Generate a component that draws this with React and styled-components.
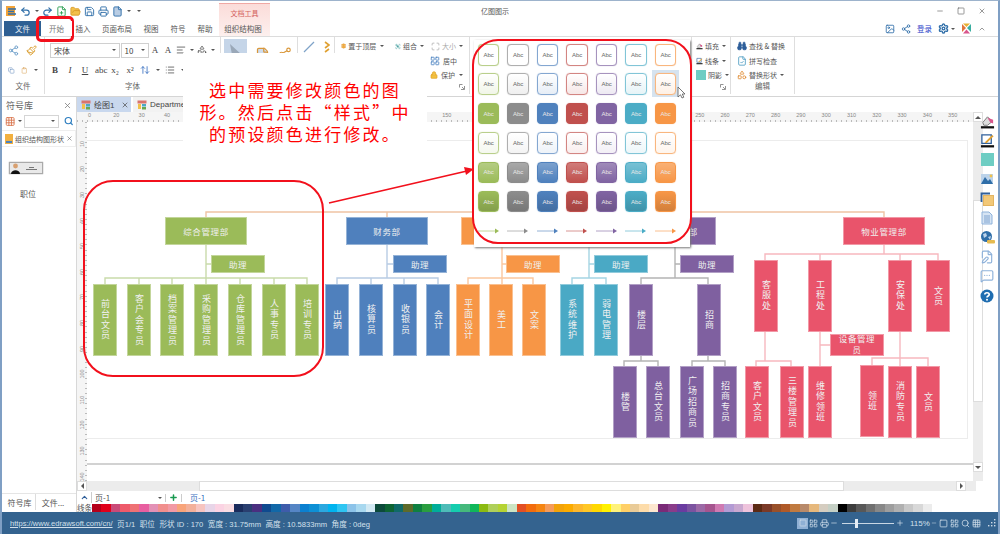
import React from "react";
import styled, { createGlobalStyle } from "styled-components";
import {
  Undo2, Redo2, FilePlus, FolderOpen, Save, Printer, File, Share2, Settings, Search, Lock, Copy, Clipboard,
  Paintbrush, Binoculars, FileCheck, Layers, FilePen, MessageSquareMore,
  Plus, Minus, Square, X, ChevronUp, Image, Shapes, ArrowUpDown, List, AlignLeft, Group, Maximize, Grid3x3,
  LayoutGrid,
} from "lucide-react";

const GREEN = "#9bbb59";
const BLUE = "#4f80bd";
const ORANGE = "#f79646";
const TEAL = "#4aa9c5";
const PURPLE = "#7f60a0";
const PINK = "#e9546b";

const GlobalStyle = createGlobalStyle`
  html, body { margin: 0; padding: 0; background: #fff; }
  body { font-family: "Noto Sans CJK SC", "Liberation Sans", sans-serif; color: #555; }
  * { box-sizing: border-box; }
`;

const Win = styled.div`
  position: relative;
  width: 1000px;
  height: 534px;
  overflow: hidden;
  background: #fff;
  display: flex;
  flex-direction: column;
  border-top: 1px solid #9db3cc;
  border-left: 2px solid #7f9fc4;
  border-right: 2px solid #7f9fc4;
`;

const TitleBar = styled.div`
  height: 20px;
  display: flex;
  align-items: center;
  padding-left: 3px;
  font-size: 7px;
`;

const QuickBar = styled.div`
  width: 476px;
  display: flex;
  align-items: center;
  gap: 3px;
  color: #2f6ea8;
`;

const ContextHead = styled.div`
  position: absolute;
  left: 217px;
  top: 2px;
  width: 51px;
  height: 33px;
  padding-top: 4px;
  text-align: center;
  font-size: 7px;
  color: #d4605c;
  background: linear-gradient(#fbdcd9, #fdf0ee);
  border-top: 1px solid #f0a8a4;
`;

const WinControls = styled.div`
  margin-left: auto;
  width: 62px;
  display: flex;
  justify-content: space-between;
  padding-right: 12px;
  color: #666;
`;

const TabRow = styled.div`
  height: 16px;
  display: flex;
  align-items: stretch;
  font-size: 7.5px;
  border-bottom: 1px solid #dcdcdc;
`;

const FileTab = styled.div`
  width: 37px;
  margin-left: 2px;
  background: #2e5f93;
  color: #e8eff6;
  display: flex;
  align-items: center;
  justify-content: center;
`;

const Tab = styled.div`
  width: ${(p) => p.$w}px;
  display: flex;
  align-items: center;
  justify-content: center;
  background: ${(p) => (p.$on ? "#fff" : "transparent")};
  position: relative;
  z-index: 1;
  color: ${(p) => (p.$on ? "#777" : "#555")};
`;

const TabRight = styled.div`
  margin-left: auto;
  display: flex;
  align-items: center;
  gap: 6px;
  padding-right: 12px;
  color: #2f6ea8;
`;

const Login = styled.span`
  color: #2a3fc8;
  font-size: 7.5px;
`;

const Ribbon = styled.div`
  height: 60px;
  display: flex;
  border-bottom: 1px solid #d5d5d5;
`;

const RibbonGroup = styled.div`
  width: ${(p) => p.$w}px;
  padding-top: ${(p) => p.$top ?? 3}px;
  display: flex;
  flex-direction: column;
  position: relative;
  border-right: 1px solid #dedede;
  margin-bottom: 2px;
  flex: none;
`;

const GroupBody = styled.div`
  flex: 1;
  min-height: 0;
  display: flex;
  flex-direction: column;
  padding: 0 ${(p) => p.$pad ?? 6}px;
`;

const GroupLabel = styled.div`
  height: 14px;
  flex: none;
  font-size: 7.5px;
  text-align: center;
  color: #666;
`;

const LauncherRow = styled.div`
  height: 14px;
  flex: none;
  display: flex;
  justify-content: flex-end;
  align-items: center;
  padding-right: 4px;
`;

const Row = styled.div`
  height: ${(p) => p.$h ?? 20}px;
  flex: none;
  display: flex;
  align-items: center;
  gap: ${(p) => p.$gap ?? 5}px;
  padding-left: ${(p) => p.$pl ?? 0}px;
  font-size: 7px;
  white-space: nowrap;
`;

const Select = styled.div`
  width: ${(p) => p.$w}px;
  height: 15px;
  border: 1px solid #d0d0d0;
  padding: 0 3px;
  display: flex;
  align-items: center;
  justify-content: space-between;
  font-size: 8px;
  color: #444;
`;

const Caret = styled.span`
  display: inline-block;
  flex: none;
  width: 0;
  height: 0;
  border-left: 2px solid transparent;
  border-right: 2px solid transparent;
  border-top: 2.5px solid #555;
  margin-left: ${(p) => p.$ml ?? 1}px;
`;

const Spacer = styled.span`
  width: ${(p) => p.$w}px;
  flex: none;
`;

const Muted = styled.span`
  display: flex;
  align-items: center;
  gap: 2px;
  color: #aaa;
`;

const Fmt = styled.span`
  font-family: "Liberation Serif", serif;
  font-size: 9px;
  font-weight: ${(p) => (p.$b ? 700 : 400)};
  font-style: ${(p) => (p.$i ? "italic" : "normal")};
  text-decoration: ${(p) => (p.$u ? "underline" : "none")};
  color: #444;
  width: 10px;
  text-align: center;
`;

const PointerBtn = styled.div`
  width: 23px;
  height: 30px;
  margin-left: 3px;
  background: #c5d5e8;
  display: flex;
  justify-content: center;
  padding-top: 4px;
`;

const Main = styled.div`
  flex: 1;
  display: flex;
  min-height: 0;
`;

const SymbolPanel = styled.div`
  width: 75px;
  display: flex;
  flex-direction: column;
  border-right: 1px solid #d8d8d8;
`;

const PanelHead = styled.div`
  height: 16px;
  padding: 0 4px;
  display: flex;
  align-items: center;
  justify-content: space-between;
  font-size: 9px;
  color: #666;
`;

const PanelTools = styled.div`
  height: 16px;
  padding: 0 3px;
  display: flex;
  align-items: center;
  gap: 2px;
`;

const SmallInput = styled.div`
  width: 36px;
  height: 13px;
  border: 1px solid #d5d5d5;
  margin-right: 3px;
  display: flex;
  align-items: center;
  justify-content: flex-end;
  padding-right: 3px;
`;

const PanelTab = styled.div`
  height: 17px;
  margin-top: 1px;
  display: flex;
  align-items: center;
  gap: 2px;
  padding: 0 1px 0 3px;
  font-size: 7px;
  white-space: nowrap;
  border: 1px solid #eee;
  border-left: 0;
`;

const ShapeList = styled.div`
  flex: 1;
  padding: 15px 0 0 7px;
`;

const ShapeThumb = styled.div`
  width: 34px;
  height: 12px;
  display: flex;
  align-items: center;
  background: #e9e9e9;
  border: 1px solid #aaa;
  box-shadow: 0 0 1px #888;
`;

const ThumbLines = styled.div`
  flex: 1;
  display: flex;
  flex-direction: column;
  align-items: center;
  gap: 1px;
  &::before, &::after { content: ""; height: 1px; background: #777; }
  &::before { width: 5px; }
  &::after { width: 11px; }
`;

const ShapeName = styled.div`
  font-size: 8px;
  margin: 14px 0 0 11px;
`;

const PanelTabs = styled.div`
  height: 17px;
  margin-bottom: 2px;
  display: flex;
  align-items: center;
  font-size: 8px;
  border-top: 1px solid #e5e5e5;
`;

const PanelTabItem = styled.div`
  width: 34px;
  height: 100%;
  padding-left: ${(p) => p.$pl ?? 0}px;
  display: flex;
  align-items: center;
  justify-content: center;
  border-right: ${(p) => (p.$line ? "1px solid #ddd" : "0")};
`;

const Workspace = styled.div`
  flex: 1;
  min-width: 0;
  display: flex;
  flex-direction: column;
`;

const DocTabs = styled.div`
  height: 15px;
  display: flex;
  gap: 2px;
  font-size: 8px;
`;

const DocTab = styled.div`
  width: ${(p) => p.$w}px;
  background: ${(p) => (p.$on ? "#c9d8ee" : "#f2f2f2")};
  display: flex;
  align-items: center;
  gap: 3px;
  padding-left: 4px;
  color: #444;
  font-family: "Liberation Sans", "Noto Sans CJK SC", sans-serif;
  overflow: hidden;
  white-space: nowrap;
`;

const EditorTop = styled.div`
  height: 369px;
  width: 899px;
  display: flex;
`;

const EditorCol = styled.div`
  flex: 1;
  display: flex;
  flex-direction: column;
`;

const HRuler = styled.div`
  height: 10px;
  display: flex;
  padding-left: 11px;
  font-size: 5.5px;
  line-height: 7px;
  color: #888;
  font-family: "Liberation Sans", sans-serif;
  background:
    repeating-linear-gradient(90deg, #bbb 0 1px, transparent 1px 5.06px) 0 100% / 100% 2px no-repeat,
    #f5f5f5;
`;

const HMark = styled.span`
  width: 25.3px;
  flex: none;
`;

const CanvasRow = styled.div`
  flex: 1;
  display: flex;
  min-height: 0;
`;

const VRuler = styled.div`
  width: 10px;
  display: flex;
  flex-direction: column;
  padding-top: 9px;
  background:
    repeating-linear-gradient(0deg, #bbb 0 1px, transparent 1px 5.12px) 100% 0 / 2px 100% no-repeat,
    #f5f5f5;
`;

const VMark = styled.div`
  height: 25.6px;
  flex: none;
  font-size: 5.5px;
  color: #888;
  font-family: "Liberation Sans", sans-serif;
  display: flex;
  align-items: center;
  justify-content: center;
  & > span { transform: rotate(-90deg); }
`;

const Canvas = styled.div`
  flex: 1;
  position: relative;
  padding: 18px 5px 0 0;
`;

const PageSheet = styled.div`
  height: 299px;
  border: 1px solid #ececec;
  border-left: 0;
`;

const EndLine = styled.div`
  height: 2px;
  margin: 24px -5px 0 0;
  background: #d2d2d2;
`;

const Wires = styled.svg`
  position: absolute;
  left: 0;
  top: 0;
  width: 879px;
  height: 359px;
  fill: none;
  stroke-width: 1.4;
`;

const ORG_X = 87;
const ORG_Y = 122;

const OrgNode = styled.div.attrs((p) => ({
  style: { left: p.$x - ORG_X, top: p.$y - ORG_Y, width: p.$w, height: p.$h },
}))`
  position: absolute;
  display: flex;
  align-items: center;
  justify-content: center;
  background: ${(p) => p.$color};
  border: 1px solid color-mix(in srgb, ${(p) => p.$color} 60%, #fff);
  color: #f0f0f0;
  text-align: center;
  font-size: ${(p) => (p.$vertical ? 9 : 8.5)}px;
  line-height: ${(p) => (p.$tight ? 11 : 12)}px;
  letter-spacing: ${(p) => (p.$vertical ? 1.4 : 0.6)}px;
  writing-mode: ${(p) => (p.$vertical ? "vertical-rl" : "horizontal-tb")};
  text-orientation: upright;
  padding-bottom: ${(p) => (p.$tight ? 3 : 0)}px;
`;

const VScroll = styled.div`
  width: 10px;
  display: flex;
  flex-direction: column;
  background: #ececec;
`;

const ArrowBtn = styled.div`
  width: 10px;
  height: 10px;
  flex: none;
  background: #fff;
  border: 1px solid #ddd;
  display: flex;
  align-items: center;
  justify-content: center;
`;

const DownBtn = styled(ArrowBtn)`
  margin-top: auto;
  margin-bottom: 9px;
`;

const Tri = styled.span`
  width: 0;
  height: 0;
  border: 3px solid transparent;
  ${(p) => p.$dir === "up" && "border-bottom-color:#555; border-top-width:0;"}
  ${(p) => p.$dir === "down" && "border-top-color:#555; border-bottom-width:0;"}
  ${(p) => p.$dir === "left" && "border-right-color:#555; border-left-width:0;"}
  ${(p) => p.$dir === "right" && "border-left-color:#555; border-right-width:0;"}
`;

const VThumb = styled.div`
  height: 202px;
  margin-top: 78px;
  background: #fff;
  border: 1px solid #ddd;
`;

const HScroll = styled.div`
  height: 10px;
  width: 899px;
  flex: none;
  display: flex;
  background: #ececec;
`;

const HThumb = styled.div`
  width: 645px;
  margin: 0 112px;
  background: #fff;
  border: 1px solid #ddd;
`;

const RightBar = styled.div`
  position: absolute;
  right: 0;
  top: 109px;
  width: 22px;
  display: flex;
  flex-direction: column;
  align-items: center;
  padding-top: 3px;
  gap: 3.4px;
`;

const RightIcon = styled.div`
  width: 16px;
  height: 16px;
  display: flex;
  align-items: center;
  justify-content: center;
  color: ${(p) => p.$c ?? "#8fb2da"};
`;

const ColorBlock = styled.span`
  width: ${(p) => p.$s}px;
  height: ${(p) => p.$s}px;
  flex: none;
  background: #6ecdc3;
`;

const PageBar = styled.div`
  height: 13px;
  display: flex;
  align-items: center;
  font-size: 8px;
  padding-left: 3px;
`;

const PageName = styled.div`
  width: 66px;
  margin-left: 2px;
  padding-left: 3px;
  border-left: 1px solid #ccc;
  color: #555;
`;

const PageLink = styled.div`
  margin-left: 5px;
  color: #3a70c0;
`;

const Divider = styled.span`
  width: 1px;
  height: 8px;
  margin: 0 3px;
  background: #ccc;
`;

const SwatchRow = styled.div`
  height: 8px;
  display: flex;
  align-items: center;
`;

const SwatchLabel = styled.div`
  width: 15px;
  font-size: 7.5px;
  line-height: 8px;
  color: #555;
`;

const Swatch = styled.span`
  width: 9.45px;
  height: 8px;
  flex: none;
  background: ${(p) => p.$c};
`;

const StatusBar = styled.div`
  height: 22px;
  margin: 0 -2px;
  flex: none;
  display: flex;
  align-items: center;
  padding: 0 4px 0 10px;
  gap: 4.5px;
  background: #34638f;
  color: #d3e0ec;
  font-size: 7.6px;
  font-family: "Liberation Sans", "Noto Sans CJK SC", sans-serif;
`;

const StatusLink = styled.span`
  text-decoration: underline;
`;

const StatusRight = styled.div`
  margin-left: auto;
  display: flex;
  align-items: center;
`;

const ViewBtn = styled.span`
  width: 11px;
  height: 11px;
  display: flex;
  align-items: center;
  justify-content: center;
  background: ${(p) => (p.$on ? "#8fb0d4" : "transparent")};
`;

const ZoomTrack = styled.div`
  position: relative;
  width: 52px;
  height: 1px;
  margin: 0 2px 0 4px;
  background: #c9d7e4;
`;

const ZoomThumb = styled.span`
  position: absolute;
  left: 13px;
  top: -4px;
  width: 3px;
  height: 9px;
  background: #e4ecf4;
`;

const ZoomText = styled.span`
  width: 21px;
  margin-left: 6px;
  font-size: 8px;
`;

const StatusTools = styled.div`
  display: flex;
  align-items: center;
  gap: 2px;
  margin-right: 7px;
`;

/* everything below lies over the ribbon and the page */
const Note = styled.div`
  position: absolute;
  left: 181px;
  top: 52px;
  width: 244px;
  height: 88px;
  padding-top: 26px;
  background: #fff;
  color: #f00;
  font-size: 17px;
  line-height: 22px;
  letter-spacing: 2.2px;
  text-align: center;
  white-space: nowrap;
`;

const Gallery = styled.div`
  position: absolute;
  z-index: 0;
  left: 472px;
  top: 39px;
  width: 216px;
  height: 207px;
  padding: 4px 0 0 4px;
  background: #fff;
  box-shadow: 1px 1px 2px #777;
  display: grid;
  grid-template-columns: repeat(7, 21.3px);
  grid-auto-rows: 21.5px;
  column-gap: 8.2px;
  row-gap: 7.9px;
`;

const toneFill = (p) => {
  const c = p.$tone;
  if (p.$row === 0) return "#fff";
  if (p.$row === 1) return `linear-gradient(#fff, color-mix(in srgb, ${c} 14%, #fff))`;
  if (p.$row === 2) return c;
  if (p.$row === 3) return `linear-gradient(#fff, color-mix(in srgb, ${c} 10%, #fff))`;
  if (p.$row === 4) return `linear-gradient(color-mix(in srgb, ${c} 75%, #fff), ${c})`;
  return `linear-gradient(${c}, color-mix(in srgb, ${c} 85%, #000))`;
};

const StyleTile = styled.div`
  position: relative;
  border-radius: 4px;
  display: flex;
  align-items: center;
  justify-content: center;
  font-size: 6px;
  font-family: "Liberation Sans", sans-serif;
  background: ${toneFill};
  border: 1px solid color-mix(in srgb, ${(p) => p.$tone} ${(p) => (p.$row === 2 || p.$row > 3 ? 100 : 70)}%, #fff);
  box-shadow: 0 0 1px color-mix(in srgb, ${(p) => p.$tone} 60%, #fff);
  color: ${(p) => (p.$row === 2 || p.$row > 3 ? "#e8e8e8" : "#666")};
`;

const TileHover = styled.span`
  position: absolute;
  inset: -4px -4px -3px -4px;
  z-index: -1;
  background: #d5e3f0;
`;

const ArrowCell = styled.div`
  display: flex;
  align-items: center;
`;

const Cursor = styled.svg`
  position: absolute;
  left: 675px;
  top: 85px;
  width: 9px;
  height: 13px;
`;

const Ring = styled.div`
  position: absolute;
  left: ${(p) => p.$x}px;
  top: ${(p) => p.$y}px;
  width: ${(p) => p.$w}px;
  height: ${(p) => p.$h}px;
  border: ${(p) => p.$b ?? 2}px solid #f2101c;
  border-radius: ${(p) => p.$r}px;
  pointer-events: none;
`;

const NoteArrow = styled.svg`
  position: absolute;
  left: 325px;
  top: 160px;
  width: 150px;
  height: 50px;
`;

const swatches = [
  "#b5001a","#e0001b","#c94a78","#ee5a6a","#ef7174","#e85fa0","#e391b6","#f18f8d","#f29aa5","#f8a47a","#f3b09a","#f7c4c0","#e8d5e8","#fbd3e3","#fadde3",
  "#1a2c5c","#2a3f70","#4a2f80","#0f4a8f","#1168a8","#3e5cab","#5585c5","#0b80d0","#0d90d5","#2ba8e0","#00b4ef","#2fc5f2","#8cc3e9","#a8d8ef","#d2e9f3",
  "#0c4a3a","#0e6433","#0f6a68","#5e6a2a","#0f8040","#2a9e40","#00ae9a","#4ebcb8","#15cdae","#45b97c","#10b75a","#8cbb12","#afd05a","#b5d334","#cce5c4",
  "#e34f24","#f26c0d","#f58512","#f59b5a","#f2a30a","#fbab00","#fdb72c","#ffc726","#ffd800","#fff100","#fff27a","#ffcf66","#e9cb98","#fddcaa","#fde7cf",
  "#7a2b78","#8a3c8a","#6a3ca0","#7c53a0","#9c69a6","#a5558f","#cf7ab2","#b39bd4","#c9a8d0","#eec3dc",
  "#5c2a14","#7b3a28","#99502a","#b05a28","#c07a40","#b88a6a","#e6b87c","#d5cdc0","#c5d0c5",
  "#000000","#3d3d3d","#585858","#707070","#888888","#9e9e9e","#b0b0b0","#c8c8c8","#d8d8d8","#ececec",
];

const tones = ["#9bbb59", "#8c8c8c", "#4f81bd", "#c0504d", "#8064a2", "#4bacc6", "#f79646"];

// the orange and teal heads sit under the style gallery, their names don't show
const heads = [
  [165, "综合管理部", GREEN], [346, "财务部", BLUE], [461, "", ORANGE],
  [548, "", TEAL], [634, "招商管理部", PURPLE], [843, "物业管理部", PINK],
];
const helpers = [[211, GREEN], [393, BLUE], [506, ORANGE], [594, TEAL], [680, PURPLE]];

const staff = [
  [93, 284, GREEN, "前台文员"], [127, 284, GREEN, "客户会专员"], [160, 284, GREEN, "档案管理员"], [194, 284, GREEN, "采购管理员"],
  [228, 284, GREEN, "仓库管理员"], [262, 284, GREEN, "人事专员"], [295, 284, GREEN, "培训专员"],
  [325, 284, BLUE, "出纳"], [359, 284, BLUE, "核算员"], [393, 284, BLUE, "收银员"], [426, 284, BLUE, "会计"],
  [456, 284, ORANGE, "平面设计"], [489, 284, ORANGE, "美工"], [522, 284, ORANGE, "文案"],
  [560, 284, TEAL, "系统维护"], [594, 284, TEAL, "弱电管理"],
  [629, 284, PURPLE, "楼层"], [697, 284, PURPLE, "招商"],
  [613, 366, PURPLE, "楼管"], [646, 366, PURPLE, "总台文员"], [680, 366, PURPLE, "广场招商员"], [713, 366, PURPLE, "招商专员"],
  [754, 260, PINK, "客服处"], [808, 260, PINK, "工程处"], [888, 260, PINK, "安保处"], [926, 260, PINK, "文员"],
  [745, 366, PINK, "客户文员"], [780, 366, PINK, "三楼管理员"], [808, 366, PINK, "维修领班"],
  [860, 365, PINK, "领班"], [888, 366, PINK, "消防专员"], [916, 366, PINK, "文员"],
];

const wires = [
  ["#efc4a4", "M206 217V212H884V217M387 212V217"],
  ["#c9dbab", "M206 245V284M206 264H211M105 284V278H307V284M139 278V284M172 278V284M240 278V284M274 278V284"],
  ["#b8cce4", "M387 245V278M387 264H393M337 284V278H438V284M371 278V284M404 278V284"],
  ["#fbc79e", "M502 245V284M502 264H506M468 284V278H533V284"],
  ["#a5d5e3", "M589 245V278M589 264H594M572 284V278H606V284"],
  ["#b4b4b4", "M675 245V278M675 264H680M641 284V278H708V284M641 356V361M624 366V361H658V366M708 356V361M692 366V361H725V366"],
  ["#f7b8bf", "M884 245V254M765 260V254H938V260M820 254V260M900 254V260M765 332V361M756 366V361H791V366M820 332V366M820 345H830M900 332V366M872 365V358H928V366"],
];

const hMarks = [0, 20, 30, 40, 50, 60, 70, 80, 90, 100, 110, 120, 130, 140, 150, 160, 170, 180, 190, 200, 210, 220, 230, 240, 250, 260, 270, 280, 290, 300, 310, 320, 330, 340, 350];
const vMarks = [10, 20, 30, 40, 50, 60, 70, 80, 90, 100, 110, 120, 130, 140];
// these ruler numbers are covered by the note and by the gallery
const rulerShows = (m) => !((m >= 50 && m <= 140) || (m >= 160 && m <= 240));

const LogoMark = () => (
  <svg width="12" height="12" viewBox="0 0 12 12">
    <rect x="1" y="1" width="9" height="10" fill="#f2a33a" />
    <path d="M3 4h8M3 6.5h6M3 9h8" stroke="#2f6ea8" strokeWidth="1.3" />
  </svg>
);

const TabIcon = () => (
  <svg width="10" height="10" viewBox="0 0 10 10">
    <rect x="0.5" y="0.5" width="9" height="3" fill="#d9746c" />
    <rect x="1" y="4" width="3" height="5" fill="#f2c14a" />
    <rect x="5" y="4" width="4" height="2.5" fill="#4aa9c5" />
    <rect x="5" y="7" width="4" height="2.5" fill="#6aa84f" />
  </svg>
);

const BucketIcon = ({ s }) => (
  <svg width={s} height={s} viewBox="0 0 16 16">
    <path d="M3 9L8 3L13 8L8 12H4Z" fill="#ddd" stroke="#777" />
    <path d="M8 4L14 6V10L11 9Z" fill="#d8568c" />
    <rect x="1" y="13" width="14" height="2.4" fill="#111" />
  </svg>
);

const PenIcon = ({ s }) => (
  <svg width={s} height={s} viewBox="0 0 16 16">
    <path d="M2 2H12V11H2Z" fill="#fff" stroke="#2f5f9a" strokeWidth="1.4" />
    <path d="M5 10L13 2L14.5 3.5L7 11Z" fill="#e0a030" />
    <rect x="1" y="13" width="14" height="2.4" fill="#111" />
  </svg>
);

const PictureIcon = () => (
  <svg width="14" height="14" viewBox="0 0 14 14">
    <rect x="1" y="2" width="12" height="10" fill="#bcd3ea" />
    <path d="M1 12L5 5L8 9L10 7L13 12Z" fill="#2f6ea8" />
    <circle cx="11" cy="4" r="1.4" fill="#f2c14a" />
  </svg>
);

const StackIcon = () => (
  <svg width="14" height="14" viewBox="0 0 14 14">
    <path d="M1.5 10V1.5H10" fill="none" stroke="#2f5f9a" strokeWidth="1.8" />
    <rect x="3.5" y="3.5" width="10" height="10" fill="#f2c878" stroke="#e3b460" />
  </svg>
);

const DocListIcon = () => (
  <svg width="14" height="14" viewBox="0 0 14 14">
    <path d="M2 1H9L12 4V13H2Z" fill="#d6e4f3" stroke="#8fb2da" />
    <path d="M4 5H10M4 7H10M4 9H10M4 11H10" stroke="#7fa3d0" />
  </svg>
);

const GlobeIcon = () => (
  <svg width="15" height="15" viewBox="0 0 15 15">
    <circle cx="6.5" cy="6.5" r="5.5" fill="#2f6ea8" />
    <path d="M3 4L6 3L7 6L4 8ZM8 7L11 6L10 10Z" fill="#bcd3ea" />
    <rect x="7" y="10" width="8" height="3.5" rx="1" fill="#e6bb50" />
  </svg>
);

const HelpIcon = () => (
  <svg width="14" height="14" viewBox="0 0 14 14">
    <circle cx="7" cy="7" r="6.5" fill="#1f6db0" />
    <path d="M4.8 5.4C4.8 3.2 9.2 3.2 9.2 5.4C9.2 7 7 7 7 8.6" fill="none" stroke="#fff" strokeWidth="1.7" />
    <circle cx="7" cy="10.7" r="1" fill="#fff" />
  </svg>
);

const BrandIcon = () => (
  <svg width="11" height="11" viewBox="0 0 11 11">
    <path d="M1 1L5 5L1 9Z" fill="#e0743a" />
    <path d="M10 1L6 5L10 9Z" fill="#3aaea0" />
    <path d="M2 0.5H9L5.5 4Z" fill="#e8b030" />
    <path d="M2 10.5H9L5.5 6.5Z" fill="#d8568c" />
  </svg>
);

const Launcher = () => (
  <svg width="6" height="6" viewBox="0 0 6 6">
    <path d="M.5 3.5V.5H3.5M5.5 2V5.5H2M3 3L5 5" fill="none" stroke="#777" strokeWidth=".8" />
  </svg>
);

const Grip = () => (
  <svg width="8" height="8" viewBox="0 0 8 8" fill="#cfdbe7">
    <rect x="6" y="0" width="1.4" height="1.4" />
    <rect x="3" y="3" width="1.4" height="1.4" /><rect x="6" y="3" width="1.4" height="1.4" />
    <rect x="0" y="6" width="1.4" height="1.4" /><rect x="3" y="6" width="1.4" height="1.4" /><rect x="6" y="6" width="1.4" height="1.4" />
  </svg>
);

const Arrow = ({ color }) => (
  <svg width="21" height="6" viewBox="0 0 21 6">
    <path d="M0 3H17" stroke={color} strokeOpacity=".6" strokeWidth="1" />
    <path d="M17 .5L21 3L17 5.5Z" fill={color} />
  </svg>
);

const App = () => {
  return (
    <>
      <GlobalStyle />
      <Win lang="zh-CN">
        <TitleBar>
          <QuickBar>
            <LogoMark />
            <Undo2 size={11} strokeWidth={2.6} /><Caret />
            <Redo2 size={11} strokeWidth={2.6} />
            <FilePlus size={11} color="#2a9e50" />
            <FolderOpen size={11} color="#d99a2a" fill="#f2c14a" />
            <Save size={11} />
            <Printer size={11} />
            <File size={11} fill="#b9cde4" /><Caret /><Caret $ml={3} />
          </QuickBar>
          <span>亿图图示</span>
          <WinControls>
            <Minus size={8} /><Square size={8} /><X size={8} />
          </WinControls>
        </TitleBar>
        <ContextHead>文档工具</ContextHead>

        <TabRow>
          <FileTab>文件</FileTab>
          <Tab $w={31} $on>开始</Tab>
          <Tab $w={22}>插入</Tab>
          <Tab $w={46}>页面布局</Tab>
          <Tab $w={22}>视图</Tab>
          <Tab $w={32}>符号</Tab>
          <Tab $w={22}>帮助</Tab>
          <Tab $w={2} />
          <Tab $w={50}>组织结构图</Tab>
          <TabRight>
            <Image size={10} />
            <Share2 size={10} />
            <Login>登录</Login>
            <Settings size={11} strokeWidth={3} /><Caret $ml={-4} />
            <BrandIcon />
            <ChevronUp size={8} color="#666" />
          </TabRight>
        </TabRow>

        <Ribbon>
          <RibbonGroup $w={43}>
            <GroupBody $pad={6}>
              <Row $gap={7}><Share2 size={11} color="#6a9cc8" /><Paintbrush size={11} color="#d99a2a" /></Row>
              <Row $gap={6}><Copy size={11} color="#6a8fc0" /><Clipboard size={11} color="#d9a35a" /><Caret /></Row>
            </GroupBody>
            <GroupLabel>文件</GroupLabel>
          </RibbonGroup>

          <RibbonGroup $w={176}>
            <GroupBody $pad={5}>
              <Row $gap={1}>
                <Select $w={71}>宋体<Caret /></Select>
                <Select $w={29}>10<Caret /></Select>
                <Row $gap={3}>
                  <Fmt>A</Fmt><Fmt>A</Fmt>
                  <AlignLeft size={10} /><Caret />
                  <Shapes size={10} /><Caret />
                </Row>
              </Row>
              <Row $gap={5}>
                <Fmt $b>B</Fmt><Fmt $i>I</Fmt><Fmt $u>U</Fmt><Fmt>abc</Fmt>
                <Fmt>x₂</Fmt><Fmt>x²</Fmt>
                <ArrowUpDown size={10} color="#3a70c0" /><Caret />
                <List size={10} /><Caret />
              </Row>
            </GroupBody>
            <GroupLabel>字体</GroupLabel>
          </RibbonGroup>

          <RibbonGroup $w={77} $top={2}>
            <Row $h={30} $gap={8}>
              <PointerBtn>
                <svg width="14" height="18" viewBox="0 0 14 18"><path d="M1 1L13 12H7L4 17Z" fill="#9aa8b8" /></svg>
              </PointerBtn>
              <FilePen size={15} color="#d9973a" fill="#cfdcec" />
              <Share2 size={14} color="#d9973a" />
            </Row>
          </RibbonGroup>

          <RibbonGroup $w={37}>
            <Row $gap={8} $h={14} $pl={5}>
              <svg width="13" height="12" viewBox="0 0 13 12"><path d="M1 11L11 1" stroke="#7fa3c8" strokeWidth="1.2" /></svg>
              <svg width="6" height="12" viewBox="0 0 6 12"><path d="M1 1L5 4L1 7M5 8L1 11" stroke="#e0a030" strokeWidth="1.6" fill="none" /></svg>
            </Row>
          </RibbonGroup>

          <RibbonGroup $w={135} $top={2}>
            <GroupBody $pad={6}>
              <Row $h={14.5} $gap={2}>
                <Layers size={10} color="#e08a20" fill="#f2b040" />置于顶层<Caret $ml={2} />
                <Spacer $w={7} />
                <Group size={11} color="#3a9a9a" />组合<Caret />
                <Spacer $w={3} />
                <Muted><Maximize size={9} />大小<Caret /></Muted>
              </Row>
              <Row $h={14.5} $gap={3} $pl={72}>
                <Caret /><Spacer $w={6} /><LayoutGrid size={10} color="#4a82c0" />居中
              </Row>
              <Row $h={14.5} $gap={3} $pl={72}>
                <Caret /><Spacer $w={6} /><Lock size={10} color="#e0a020" fill="#f2c040" />保护<Caret />
              </Row>
            </GroupBody>
            <LauncherRow><Launcher /></LauncherRow>
          </RibbonGroup>

          <RibbonGroup $w={222} />

          <RibbonGroup $w={39} $top={2}>
            <GroupBody $pad={4}>
              <Row $h={14.5} $gap={2}><BucketIcon s={10} />填充<Caret /></Row>
              <Row $h={14.5} $gap={2}><PenIcon s={10} />线条<Caret /></Row>
              <Row $h={14.5} $gap={2}><ColorBlock $s={10} />阴影<Caret /></Row>
            </GroupBody>
            <LauncherRow><Launcher /></LauncherRow>
          </RibbonGroup>

          <RibbonGroup $w={64} $top={2}>
            <GroupBody $pad={6}>
              <Row $h={14.5} $gap={2}><Binoculars size={10} color="#2f5f9a" fill="#2f5f9a" />查找 &amp; 替换</Row>
              <Row $h={14.5} $gap={2}><FileCheck size={10} color="#4a9ac0" />拼写检查</Row>
              <Row $h={14.5} $gap={2}><Shapes size={10} color="#e08a30" />替换形状<Caret /></Row>
            </GroupBody>
            <GroupLabel>编辑</GroupLabel>
          </RibbonGroup>
        </Ribbon>

        <Main>
          <SymbolPanel>
            <PanelHead>符号库<X size={9} color="#777" /></PanelHead>
            <PanelTools>
              <Grid3x3 size={11} color="#d9734a" /><Caret />
              <SmallInput><Caret /></SmallInput>
              <Search size={10} color="#2f7fc0" strokeWidth={3} />
            </PanelTools>
            <PanelTab>
              <svg width="8" height="10" viewBox="0 0 8 10"><rect width="8" height="10" fill="#f2b040" /><rect x="1" y="7" width="6" height="2" fill="#4a82c0" /></svg>
              组织结构图形状
              <X size={7} color="#666" />
            </PanelTab>
            <ShapeList>
              <ShapeThumb>
                <svg width="11" height="11" viewBox="0 0 11 11"><circle cx="5.5" cy="3" r="2.4" fill="#d8a070" /><path d="M1 11C1 6 10 6 10 11Z" fill="#111" /></svg>
                <ThumbLines />
              </ShapeThumb>
              <ShapeName>职位</ShapeName>
            </ShapeList>
            <PanelTabs>
              <PanelTabItem $line $pl={2}>符号库</PanelTabItem>
              <PanelTabItem>文件...</PanelTabItem>
            </PanelTabs>
          </SymbolPanel>

          <Workspace>
            <DocTabs>
              <DocTab $w={54} $on><TabIcon />绘图1<Spacer $w={1} /><X size={8} /></DocTab>
              <DocTab $w={60}><TabIcon />Department</DocTab>
            </DocTabs>
            <EditorTop>
              <EditorCol>
                <HRuler>
                  {hMarks.map((m) => <HMark key={m}>{rulerShows(m) ? m : ""}</HMark>)}
                </HRuler>
                <CanvasRow>
                  <VRuler>
                    {vMarks.map((m) => <VMark key={m}><span>{m}</span></VMark>)}
                  </VRuler>
                  <Canvas>
                    <PageSheet />
                    <EndLine />
                    <Wires viewBox="87 122 879 359">
                      {wires.map(([c, d]) => <path key={c} d={d} stroke={c} />)}
                    </Wires>
                    {heads.map(([x, t, c]) => (
                      <OrgNode key={x} $x={x} $y={217} $w={82} $h={28} $color={c}>{t}</OrgNode>
                    ))}
                    {helpers.map(([x, c]) => (
                      <OrgNode key={x} $x={x} $y={255} $w={54} $h={18} $color={c}>助理</OrgNode>
                    ))}
                    {staff.map(([x, y, c, t]) => (
                      <OrgNode key={`${x}-${y}`} $vertical $x={x} $y={y} $w={24} $h={72} $color={c}>{t}</OrgNode>
                    ))}
                    <OrgNode $tight $x={830} $y={334} $w={54} $h={22} $color={PINK}>设备管理<br />员</OrgNode>
                  </Canvas>
                </CanvasRow>
              </EditorCol>
              <VScroll>
                <ArrowBtn><Tri $dir="up" /></ArrowBtn>
                <VThumb />
                <DownBtn><Tri $dir="down" /></DownBtn>
              </VScroll>
            </EditorTop>
            <HScroll>
              <ArrowBtn><Tri $dir="left" /></ArrowBtn>
              <HThumb />
              <ArrowBtn><Tri $dir="right" /></ArrowBtn>
            </HScroll>
            <PageBar>
              <ChevronUp size={9} color="#2f5f9a" strokeWidth={3} />
              <PageName>页-1</PageName>
              <Caret />
              <Divider />
              <Plus size={9} color="#1a9a50" strokeWidth={4} />
              <Divider />
              <PageLink>页-1</PageLink>
            </PageBar>
            <SwatchRow>
              <SwatchLabel>线条</SwatchLabel>
              {swatches.map((c, i) => <Swatch key={i} $c={c} />)}
            </SwatchRow>
          </Workspace>
        </Main>

        <StatusBar>
          <StatusLink>https://www.edrawsoft.com/cn/</StatusLink>
          <span>页1/1</span>
          <span>职位</span>
          <span>形状 ID : 170</span>
          <span>宽度 : 31.75mm</span>
          <span>高度 : 10.5833mm</span>
          <span>角度 : 0deg</span>
          <StatusRight>
            <ViewBtn $on><Square size={8} /></ViewBtn>
            <ViewBtn><LayoutGrid size={9} /></ViewBtn>
            <ViewBtn><Printer size={9} /></ViewBtn>
            <Minus size={8} />
            <ZoomTrack><ZoomThumb /></ZoomTrack>
            <Plus size={8} />
            <ZoomText>115%</ZoomText>
            <StatusTools>
              <Minus size={6} />
              <Square size={9} />
              <LayoutGrid size={9} />
              <Search size={9} />
              <Grid3x3 size={9} />
            </StatusTools>
            <Grip />
          </StatusRight>
        </StatusBar>

        <RightBar>
          <RightIcon><BucketIcon s={15} /></RightIcon>
          <RightIcon><PenIcon s={15} /></RightIcon>
          <RightIcon><ColorBlock $s={13} /></RightIcon>
          <RightIcon><PictureIcon /></RightIcon>
          <RightIcon><StackIcon /></RightIcon>
          <RightIcon><DocListIcon /></RightIcon>
          <RightIcon><GlobeIcon /></RightIcon>
          <RightIcon><FilePen size={14} /></RightIcon>
          <RightIcon><MessageSquareMore size={14} /></RightIcon>
          <RightIcon><HelpIcon /></RightIcon>
        </RightBar>

        <Note>
          选中需要修改颜色的图<br />
          形。然后点击“样式”中<br />
          的预设颜色进行修改。
        </Note>

        <Gallery>
          {[0, 1, 2, 3, 4, 5].map((row) =>
            tones.map((tone, col) => (
              <StyleTile key={`${row}-${col}`} $row={row} $tone={tone}>
                {row === 1 && col === 6 && <TileHover />}
                Abc
              </StyleTile>
            ))
          )}
          {tones.map((tone) => (
            <ArrowCell key={tone}><Arrow color={tone} /></ArrowCell>
          ))}
        </Gallery>
        <Cursor viewBox="0 0 9 13">
          <path d="M1 1V11L3.5 8.8L5 12L6.8 11.2L5.3 8H8Z" fill="#fff" stroke="#555" strokeWidth=".8" />
        </Cursor>

        <Ring $x={34} $y={15} $w={38} $h={26} $r={5} $b={3} />
        <Ring $x={470} $y={38} $w={220} $h={205} $r={26} />
        <Ring $x={81} $y={179} $w={241} $h={197} $r={30} />
        <NoteArrow viewBox="0 0 150 50">
          <path d="M2 42L140 10" stroke="#f2101c" strokeWidth="1.6" />
          <path d="M147 8L137 6L139 14Z" fill="#f2101c" />
        </NoteArrow>
      </Win>
    </>
  );
};

export default App;
